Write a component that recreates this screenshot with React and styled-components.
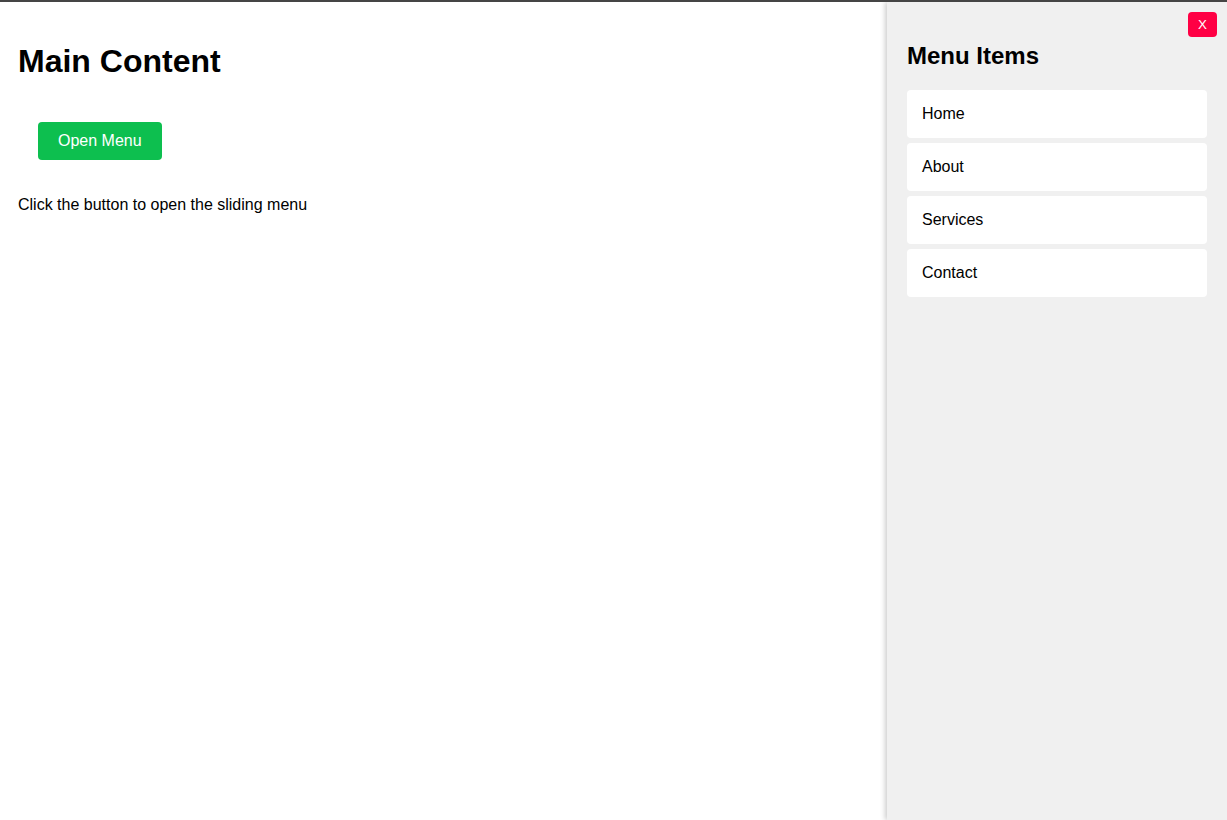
import styled, { createGlobalStyle } from "styled-components";

const GlobalStyle = createGlobalStyle`
    html, body {
        margin: 0;
        padding: 0;
        background: #ffffff;
        font-family: "Liberation Sans", Arial, sans-serif;
    }
`;

const menuItems = ["Home", "About", "Services", "Contact"];

export default function App() {
    return (
        <>
            <GlobalStyle />
            <Page>
                <Main>
                    <Title>Main Content</Title>
                    <OpenButton>Open Menu</OpenButton>
                    <Hint>Click the button to open the sliding menu</Hint>
                </Main>
                <SideMenu>
                    <CloseButton>X</CloseButton>
                    <MenuTitle>Menu Items</MenuTitle>
                    <MenuList>
                        {menuItems.map((item) => (
                            <MenuItem key={item}>{item}</MenuItem>
                        ))}
                    </MenuList>
                </SideMenu>
            </Page>
        </>
    );
}

const Page = styled.div`
    min-height: 820px;
    box-sizing: border-box;
    border-top: 2px solid #454545;
    display: flex;
    overflow: hidden;
`;

const Main = styled.main`
    flex: 1;
    padding: 20px 18px;
`;

const Title = styled.h1`
    font-size: 32px;
    font-weight: 700;
    margin: 21.44px 0;
    color: #000;
`;

const OpenButton = styled.button`
    margin: 20px;
    padding: 10px 20px;
    border: none;
    border-radius: 4px;
    background: #0dbf4f;
    color: #fff;
    font-family: "Liberation Sans", Arial, sans-serif;
    font-size: 16px;
    cursor: pointer;
`;

const Hint = styled.p`
    margin: 16px 0;
    font-size: 16px;
    color: #000;
`;

const SideMenu = styled.aside`
    position: relative;
    width: 340px;
    flex-shrink: 0;
    box-sizing: border-box;
    padding: 20px;
    background: #f0f0f0;
    box-shadow: -2px 0 5px rgba(0, 0, 0, 0.2);
`;

const CloseButton = styled.button`
    position: absolute;
    top: 10px;
    right: 10px;
    padding: 5px 10px;
    border: none;
    border-radius: 4px;
    background: #ff0044;
    color: #fff;
    font-family: "Liberation Sans", Arial, sans-serif;
    font-size: 13.333px;
    cursor: pointer;
`;

const MenuTitle = styled.h2`
    font-size: 24px;
    font-weight: 700;
    margin: 19.92px 0;
    color: #000;
`;

const MenuList = styled.ul`
    list-style: none;
    margin: 0;
    padding: 0;
    display: flex;
    flex-direction: column;
    gap: 5px;
`;

const MenuItem = styled.li`
    padding: 15px;
    background: #fff;
    border-radius: 4px;
    font-size: 16px;
    color: #000;
    cursor: pointer;
`;
